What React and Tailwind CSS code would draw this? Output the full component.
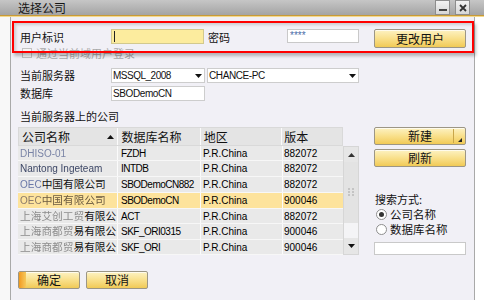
const LAT = "font-['Liberation_Sans','Noto_Sans_CJK_SC',sans-serif]";

function GoldButton({ children, className = "" }) {
  return (
    <div
      className={
        "relative flex items-center justify-center rounded-[2px] border border-[#9c9685] bg-gradient-to-b from-[#fdf2c2] via-[#f9e08b] to-[#f1ca55] text-[12px] leading-none text-[#111] shadow-[inset_0_1px_0_rgba(255,255,255,0.7)] " +
        className
      }
    >
      {children}
    </div>
  );
}

function DownArrow() {
  return (
    <svg width="7" height="4" viewBox="0 0 7 4">
      <polygon points="0,0 7,0 3.5,4" fill="#111" />
    </svg>
  );
}

const rows = [
  { name: [["DHISO-01", "text-[#7a84a6] blur-[0.3px]", true]], db: "FZDH", ver: "882072", h: "h-[15px]" },
  { name: [["Nantong Ingeteam", "text-[#3d4766] blur-[0.2px]", true]], db: "INTDB", ver: "882072", h: "h-[16px]" },
  { name: [["OEC", "text-[#6a78a8] blur-[0.3px]", true], ["中国有限公司", "text-[#111]", false]], db: "SBODemoCN882", ver: "882072", h: "h-[16px]" },
  { name: [["OEC", "text-[#8a7a6a] blur-[0.3px]", true], ["中国有限公司", "text-[#6a5a40] blur-[0.3px]", false]], db: "SBODemoCN", ver: "900046", h: "h-[16px]", sel: true },
  { name: [["上海艾创工贸", "text-[#8c8c8c] blur-[0.3px]", false], ["有限公", "text-[#111]", false]], db: "ACT", ver: "882072", h: "h-[15px]" },
  { name: [["上海商都贸", "text-[#8c8c8c] blur-[0.3px]", false], ["易有限公", "text-[#111]", false]], db: "SKF_ORI0315", ver: "900046", h: "h-[16px]" },
  { name: [["上海商都贸", "text-[#8c8c8c] blur-[0.3px]", false], ["易有限公", "text-[#111]", false]], db: "SKF_ORI", ver: "900046", h: "h-[15px]" },
];

export default function App() {
  return (
    <div className="relative h-[300px] w-[484px] overflow-hidden bg-white font-['Noto_Sans_CJK_SC',sans-serif] text-[11px] text-[#111]">
      {/* title bar */}
      <div className="flex h-[15px] bg-gradient-to-b from-[#c6c6c6] to-[#a4a4a4]">
        <span className="ml-[18px] text-[12px] leading-[15px] text-[#161616]">选择公司</span>
        <div className="ml-auto mr-[14px] flex gap-[5px]">
          <div className="flex h-[15px] w-[15px] items-end justify-center border border-[#8d8d8d] bg-gradient-to-b from-[#f2f2f2] to-[#d6d6d6] pb-[3px]">
            <div className="h-[2px] w-[8px] bg-[#444]" />
          </div>
          <div className="flex h-[15px] w-[15px] items-center justify-center border border-[#8d8d8d] bg-gradient-to-b from-[#f2f2f2] to-[#d6d6d6]">
            <svg width="8" height="8" viewBox="0 0 8 8">
              <path d="M1 1 L7 7 M7 1 L1 7" stroke="#333" strokeWidth="1.8" />
            </svg>
          </div>
        </div>
      </div>
      <div className="h-[1px] bg-[#c89a38]" />
      <div className="h-[1px] bg-[#f4d98c]" />

      <div className="flex h-[283px]">
        <div className="w-[10px] bg-[#f8f8f8]" />
        <div className="flex w-[465px] flex-col border-x border-[#a9a9a9] bg-[#f1f0f6] pt-[12px]">
          {/* row 1 */}
          <div className="flex h-[18px] items-start pl-[9px]">
            <span className="w-[91px] leading-[16px]">用户标识</span>
            <div className="relative h-[15px] w-[93px] border border-[#d2c98e] bg-[#fcec9e]">
              <div className="absolute left-[2px] top-[1px] h-[11px] w-[1px] bg-[#222]" />
            </div>
            <span className="ml-[4px] w-[79px] leading-[16px]">密码</span>
            <div className={"flex h-[14px] w-[72px] items-center border border-[#c9c9c9] bg-white pl-[2px] text-[10px] leading-none text-[#4b6ea8] " + LAT}>****</div>
            <GoldButton className="ml-[15px] h-[19px] w-[92px]">更改用户</GoldButton>
          </div>
          {/* checkbox */}
          <div className="flex h-[12px] items-center pl-[11px]">
            <div className="h-[10px] w-[10px] border border-[#c2c2c2] bg-[#f6f6f6]" />
            <span className="ml-[4px] leading-[12px] text-[#a9a9a9]">通过当前域用户登录</span>
          </div>
          {/* server */}
          <div className="mt-[9px] flex h-[15px] items-center pl-[9px]">
            <span className="w-[91px] leading-[15px]">当前服务器</span>
            <div className={"flex h-[15px] w-[94px] items-center border border-[#cdcdcd] bg-white pl-[1px] pr-[1px] text-[10px] tracking-[-0.5px] " + LAT}>
              <span>MSSQL_2008</span>
              <span className="ml-auto mr-[1px] flex"><DownArrow /></span>
            </div>
            <div className={"ml-[2px] flex h-[15px] w-[152px] items-center border border-[#cdcdcd] bg-white pl-[1px] text-[10px] tracking-[-0.4px] " + LAT}>
              <span>CHANCE-PC</span>
              <span className="ml-auto mr-[2px] flex"><DownArrow /></span>
            </div>
          </div>
          {/* db */}
          <div className="mt-[3px] flex h-[15px] items-center pl-[9px]">
            <span className="w-[91px] leading-[15px]">数据库</span>
            <div className={"flex h-[15px] w-[94px] items-center border border-[#cdcdcd] bg-white pl-[1px] text-[10px] tracking-[-0.4px] " + LAT}>SBODemoCN</div>
          </div>
          <div className="mt-[7px] h-[16px] pl-[9px] leading-[16px]">当前服务器上的公司</div>

          {/* table + right */}
          <div className="mt-[3px] flex pl-[7px]">
            <div className="flex w-[341px] flex-col">
              <div className="flex h-[19px] w-[325px] border border-[#d9d9d9] bg-[#e4e4e4] text-[12px]">
                <div className="flex w-[100px] items-center border-r border-[#fbfbfb] pl-[3px]">
                  <span>公司名称</span>
                  <svg className="ml-auto mr-[3px]" width="7" height="4" viewBox="0 0 7 4">
                    <polygon points="0,4 7,4 3.5,0" fill="#111" />
                  </svg>
                </div>
                <div className="flex w-[83px] items-center border-r border-[#fbfbfb] pl-[3px]">数据库名称</div>
                <div className="flex w-[82px] items-center border-r border-[#fbfbfb] pl-[3px]">地区</div>
                <div className="flex w-[60px] items-center pl-[2px]">版本</div>
              </div>
              <div className="flex">
                <div className="flex w-[325px] flex-col">
                  {rows.map((r, i) => (
                    <div
                      key={i}
                      className={
                        "flex border-b border-[#f7f7f7] text-[10px] text-black " +
                        r.h +
                        " " +
                        (r.sel ? "bg-[#fde39c]" : "bg-[#e9e9e9]")
                      }
                    >
                      <div className="flex w-[100px] items-center overflow-hidden whitespace-nowrap border-r border-[#fbfbfb] pl-[2px]">
                        {r.name.map(([t, c, lat], j) => (
                          <span key={j} className={c + " " + (lat ? LAT + " text-[10px]" : "text-[10.7px] leading-none")}>
                            {t}
                          </span>
                        ))}
                      </div>
                      <div className={"flex w-[83px] items-center overflow-hidden whitespace-nowrap border-r border-[#fbfbfb] pl-[3px] tracking-[-0.5px] " + LAT}>{r.db}</div>
                      <div className={"flex w-[82px] items-center border-r border-[#fbfbfb] pl-[2px] " + LAT}>P.R.China</div>
                      <div className={"flex w-[60px] items-center pl-[1px] " + LAT}>{r.ver}</div>
                    </div>
                  ))}
                </div>
                {/* scrollbar */}
                <div className="flex w-[16px] flex-col border border-[#d6d6d6] bg-[#e6e6e6]">
                  <div className="flex h-[15px] items-center justify-center">
                    <svg width="7" height="4" viewBox="0 0 7 4">
                      <polygon points="0,4 7,4 3.5,0" fill="#333" />
                    </svg>
                  </div>
                  <div className="flex h-[61px] items-center justify-center bg-[#e3e3e3]">
                    <svg width="6" height="9" viewBox="0 0 6 9">
                      {[0, 3, 6].map((y) => (
                        <g key={y}>
                          <rect x="0" y={y} width="2" height="2" fill="#c4c4c4" />
                          <rect x="4" y={y} width="2" height="2" fill="#c4c4c4" />
                        </g>
                      ))}
                    </svg>
                  </div>
                  <div className="flex-1 bg-[#f4f4f6]" />
                  <div className="flex h-[16px] items-center justify-center">
                    <DownArrow />
                  </div>
                </div>
              </div>
            </div>

            {/* right column */}
            <div className="ml-[15px] flex w-[92px] flex-col">
              <GoldButton className="h-[18px]">
                新建
                <div className="absolute right-[11px] top-[1px] h-[14px] w-[1px] bg-[#c9a64a]" />
                <svg className="absolute bottom-[2px] right-[3px]" width="4" height="4" viewBox="0 0 4 4">
                  <polygon points="4,0 4,4 0,4" fill="#222" />
                </svg>
              </GoldButton>
              <GoldButton className="mt-[4px] h-[18px]">刷新</GoldButton>
              <div className="mt-[25px] h-[15px] pl-[1px] leading-[15px]">搜索方式:</div>
              <div className="flex h-[15px] items-center pl-[2px]">
                <div className="flex h-[11px] w-[11px] items-center justify-center rounded-full border border-[#8e8e8e] bg-white">
                  <div className="h-[5px] w-[5px] rounded-full bg-[#333]" />
                </div>
                <span className="ml-[3px] text-[11.5px] leading-[15px]">公司名称</span>
              </div>
              <div className="flex h-[15px] items-center pl-[2px]">
                <div className="h-[11px] w-[11px] rounded-full border border-[#8e8e8e] bg-white" />
                <span className="ml-[3px] text-[11.5px] leading-[15px]">数据库名称</span>
              </div>
              <div className="mt-[5px] h-[13px] w-[92px] border border-[#c9c9c9] bg-white" />
            </div>
          </div>

          {/* bottom buttons */}
          <div className="mt-[16px] flex gap-[6px] pl-[7px]">
            <GoldButton className="h-[18px] w-[62px] overflow-hidden">
              <div className="absolute left-0 top-0 h-full w-[7px] bg-gradient-to-r from-[#f19a1c] to-[#f6c95a]" />
              <span className="relative">确定</span>
            </GoldButton>
            <GoldButton className="h-[18px] w-[62px]">取消</GoldButton>
          </div>
        </div>
        <div className="flex-1 bg-white" />
      </div>

      {/* red highlight annotation */}
      <div className="pointer-events-none absolute left-[12px] top-[21px] h-[32px] w-[462px] border-2 border-[#ff0000] shadow-[2px_3px_3px_rgba(0,0,0,0.25),inset_2px_2px_3px_rgba(0,0,0,0.15)]" />
    </div>
  );
}
